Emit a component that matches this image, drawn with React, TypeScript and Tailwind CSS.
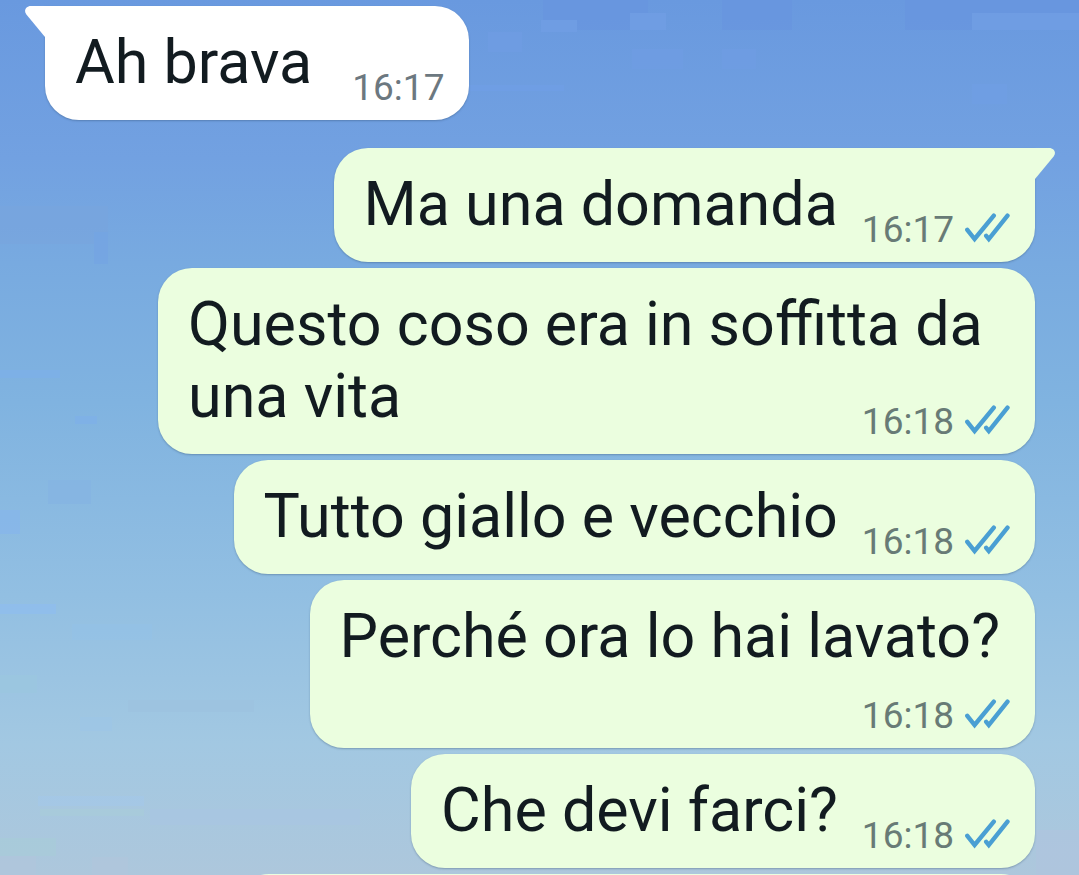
import React from 'react';
import clsx from 'clsx';

type Layout = 'inline' | 'wrapped' | 'below';

interface Message {
  id: number;
  text: string;
  time: string;
  mine: boolean;
  tail?: boolean;
  startsGroup?: boolean;
  layout: Layout;
}

const messages: Message[] = [
  { id: 1, text: 'Ah brava', time: '16:17', mine: false, tail: true, layout: 'inline' },
  { id: 2, text: 'Ma una domanda', time: '16:17', mine: true, tail: true, startsGroup: true, layout: 'inline' },
  { id: 3, text: 'Questo coso era in soffitta da una vita', time: '16:18', mine: true, layout: 'wrapped' },
  { id: 4, text: 'Tutto giallo e vecchio', time: '16:18', mine: true, layout: 'inline' },
  { id: 5, text: 'Perché ora lo hai lavato?', time: '16:18', mine: true, layout: 'below' },
  { id: 6, text: 'Che devi farci?', time: '16:18', mine: true, layout: 'inline' },
];

// Faint cloud patches of the sky wallpaper: x, y, width, height, fill
const patches: [number, number, number, number, string][] = [
  [543, 0, 105, 30, '#6895df'],
  [722, 0, 70, 30, '#6895df'],
  [905, 0, 174, 30, '#6895df'],
  [630, 13, 36, 17, '#739fe6'],
  [972, 13, 107, 17, '#739fe6'],
  [541, 20, 36, 12, '#739fe6'],
  [488, 32, 34, 20, '#709de4'],
  [632, 49, 51, 20, '#709de4'],
  [722, 49, 34, 20, '#709de4'],
  [468, 85, 96, 6, '#709fe8'],
  [972, 84, 35, 20, '#709fe5'],
  [0, 206, 108, 38, '#79a5de'],
  [94, 232, 14, 32, '#74a4e4'],
  [0, 370, 60, 8, '#7db0ea'],
  [75, 416, 22, 8, '#7eb0ea'],
  [48, 480, 43, 24, '#85b4e4'],
  [0, 510, 20, 24, '#86b6ee'],
  [0, 604, 56, 10, '#8fbdf1'],
  [72, 624, 80, 16, '#94c2e8'],
  [0, 675, 37, 18, '#9bc8df'],
  [128, 700, 126, 12, '#9dc2e0'],
  [80, 717, 32, 14, '#9dc6e8'],
  [38, 796, 106, 10, '#a4c8ea'],
  [40, 809, 104, 7, '#a9cdda'],
  [150, 809, 210, 16, '#a9c6e3'],
  [0, 838, 56, 18, '#a8cdd9'],
  [0, 856, 36, 19, '#b1c6dc'],
  [92, 857, 36, 18, '#b1c6dc'],
  [1036, 830, 43, 45, '#b0c5df'],
];

const Wallpaper: React.FC = () => (
  <svg
    className="absolute inset-0 -z-10 h-full w-full opacity-60"
    viewBox="0 0 1079 875"
    preserveAspectRatio="none"
    aria-hidden="true"
  >
    {patches.map(([x, y, width, height, fill]) => (
      <rect key={`${x}-${y}`} x={x} y={y} width={width} height={height} fill={fill} />
    ))}
  </svg>
);

const ReadTicks: React.FC = () => (
  <svg
    className="mb-1"
    width="46"
    height="30"
    viewBox="0 0 46 30"
    fill="none"
    stroke="#4a9fd3"
    strokeWidth="4.4"
    strokeLinecap="round"
    role="img"
    aria-label="Letto"
  >
    <path d="M3.3 16.8L10.6 26L29.8 2.6" />
    <path d="M22.2 22.8L24.8 26L43.5 2.6" />
  </svg>
);

const Tail: React.FC<{ mine: boolean }> = ({ mine }) => (
  <svg
    width="22"
    height="32"
    viewBox="0 0 22 32"
    className={clsx('absolute top-0', mine ? 'left-full -ml-px fill-[#ebfedf]' : 'right-full -mr-px -scale-x-100 fill-white')}
  >
    <path d="M0 0H15C20.5 0 22.5 5 19.6 8.6L1 31H0Z" />
  </svg>
);

const Meta: React.FC<{ message: Message }> = ({ message: { time, mine, layout } }) => (
  <span
    className={clsx(
      'flex items-center gap-[10px] pr-[25px] pb-[11px] text-[37px] leading-[43px]',
      mine ? 'text-[#687b76]' : 'text-[#6c7880]',
      layout === 'wrapped' ? 'float-right mt-10' : 'self-end'
    )}
  >
    <time>{time}</time>
    {mine && <ReadTicks />}
  </span>
);

const Bubble: React.FC<{ message: Message }> = ({ message }) => {
  const { text, mine, tail, startsGroup, layout } = message;

  return (
    <li
      className={clsx(
        'relative flex max-w-[877px] rounded-[34px] shadow-[0_1px_2px_rgba(40,70,100,0.35)]',
        mine ? 'self-end bg-[#ebfedf]' : 'self-start bg-white',
        tail && (mine ? 'rounded-tr-none' : 'rounded-tl-none'),
        startsGroup && 'mt-[22px]',
        layout === 'below' ? 'flex-col' : 'flex-row'
      )}
    >
      {tail && <Tail mine={mine} />}
      <p
        className={clsx(
          'pt-5 pl-[30px] text-[61px] leading-[72px] text-[#121b20]',
          layout !== 'wrapped' && 'pb-[22px]',
          layout === 'inline' && (mine ? 'pr-6' : 'pr-10'),
          layout === 'below' && 'pr-[35px]'
        )}
      >
        {text}
        {layout === 'wrapped' && <Meta message={message} />}
      </p>
      {layout !== 'wrapped' && <Meta message={message} />}
    </li>
  );
};

export default function App() {
  return (
    <main className="relative isolate h-screen overflow-hidden bg-[linear-gradient(to_bottom,#6999df_0%,#72a1e1_18%,#78aae0_30%,#80b3e0_46%,#92bfe2_68%,#a2c8e2_85%,#adc7dc_100%)] font-[Roboto,sans-serif]">
      <Wallpaper />
      <ul className="flex flex-col gap-[6px] pt-[6px] pr-11 pl-[45px]">
        {messages.map((message) => (
          <Bubble key={message.id} message={message} />
        ))}
        {/* next message, just scrolling into view */}
        <li className="h-28 w-[800px] max-w-full self-end rounded-[34px] bg-[#ebfedf]" />
      </ul>
    </main>
  );
}
